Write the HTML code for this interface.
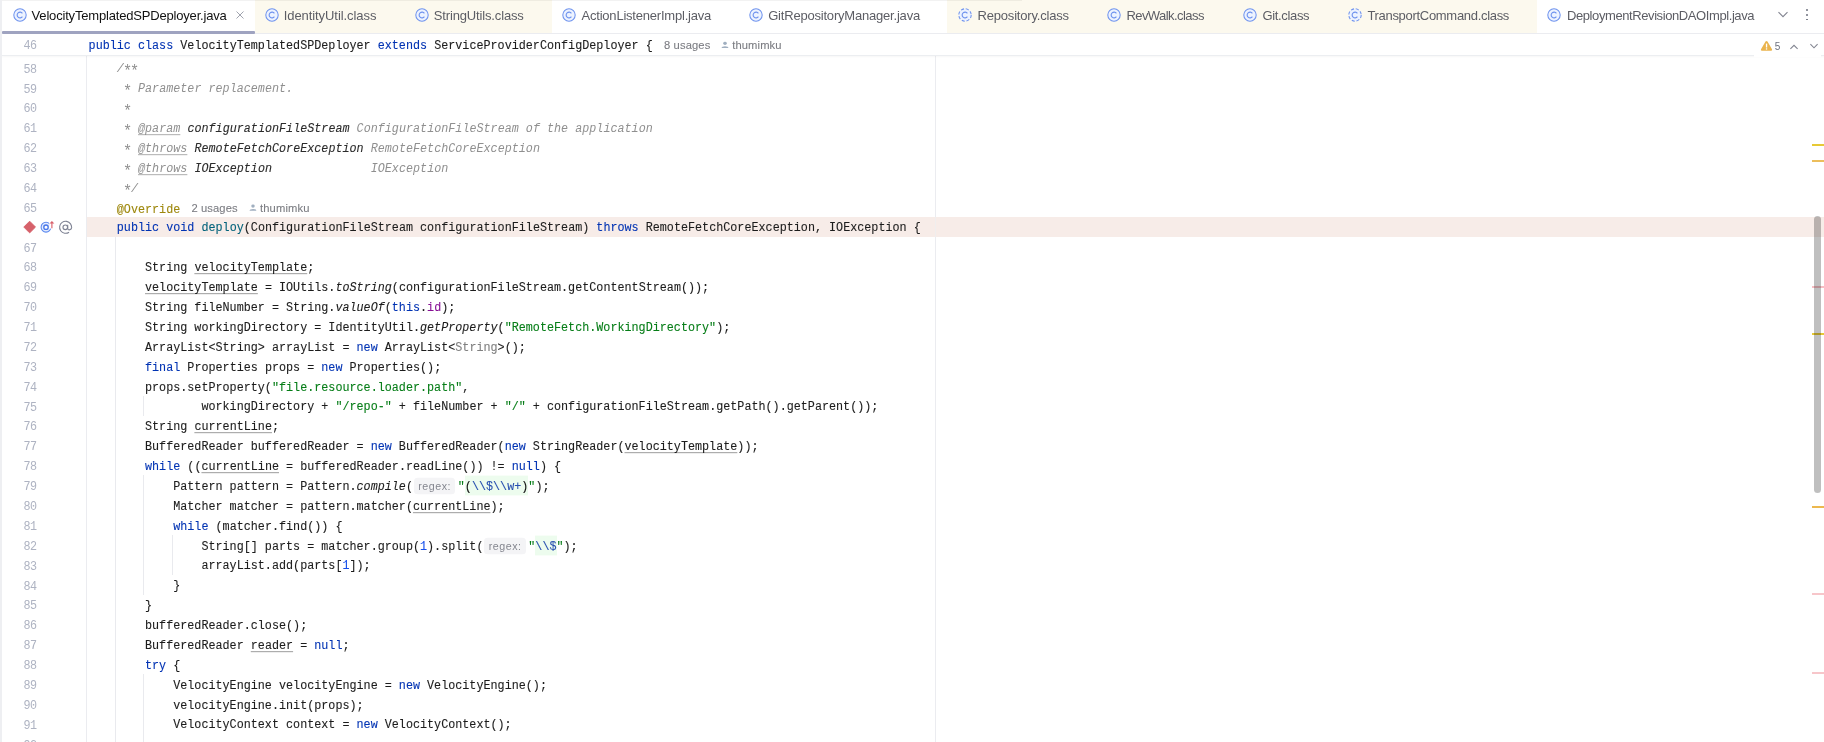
<!DOCTYPE html>
<html><head><meta charset="utf-8"><title>VelocityTemplatedSPDeployer.java</title>
<style>
*{box-sizing:border-box;margin:0;padding:0}
html,body{width:1824px;height:742px;overflow:hidden;background:#fff}
body{font-family:"Liberation Sans",sans-serif}
#root{will-change:transform;position:relative;width:1824px;height:742px;overflow:hidden;background:#fff;border-left:2px solid #eeeff2}
#root>*{margin-left:-2px}
#tabbar{position:absolute;left:0;top:0;width:1824px;height:34px;background:#fff;border-bottom:1px solid #ebecf0}
#tabbar::before{content:"";position:absolute;left:0;top:0;width:1022px;height:1px;background:rgba(0,0,0,0.05);z-index:3}
.cream{position:absolute;top:0;height:33px;background:#fcf9ee}
.cic{position:absolute;top:7.2px}
.tt{position:absolute;top:0.2px;height:31px;line-height:31px;font-size:13px;white-space:nowrap;color:#5c5d64}
.tt.ta{color:#111}
.xic{position:absolute;left:235px;top:10px}
#under{position:absolute;left:1.6px;top:31.3px;width:253px;height:3px;z-index:4;background:#9fa3c0;border-radius:1px}
.chev{position:absolute}
.dot{position:absolute;left:1806.2px;width:1.8px;height:1.8px;border-radius:1px;background:#6c707e}
#editor{position:absolute;left:0;top:34px;width:1824px;height:708px;background:#fff}
#gline{position:absolute;left:86px;top:22px;width:1px;height:700px;background:#ebecf0}
#margin{position:absolute;left:934.5px;top:22px;width:1px;height:700px;background:#ebecf0}
.ig{position:absolute;width:1px;background:#e9eaee;margin-top:-34px}
.ln{position:absolute;left:0;width:1824px;height:19.88px;line-height:19.88px;white-space:pre;font-family:"Liberation Mono",monospace;font-size:11.75px;color:#1c1c1c;margin-top:-34px}
.ln.hl::before{content:"";position:absolute;left:87px;right:0;top:-1.7px;bottom:1.7px;background:#f7ece8}
.ln .no{position:absolute;left:0;width:36.3px;top:1px;text-align:right;letter-spacing:-0.7px;color:#aeb3c2;transform:scaleY(1.1);transform-origin:0 13.07px}
.ln .code{position:absolute;left:88.6px;-webkit-text-stroke:0.1px;top:0.8px;transform:scaleY(1.1);transform-origin:0 13.07px}
.ln.sticky{top:0;height:22px;line-height:22px;margin-top:0;background:#fff}
#stickyline{position:absolute;left:2px;top:21px;width:1822px;height:1px;background:#eceef1;box-shadow:0 1px 2px rgba(0,0,0,0.05)}
.k{color:#0033b3}
.s{color:#067d17}
.c{color:#8f8f8f;font-style:italic;-webkit-text-stroke:0}
.dt{color:#8f8f8f;font-style:italic;text-decoration:underline;text-decoration-color:#b5b5b5;text-underline-offset:1.6px;-webkit-text-stroke:0}
.dp{color:#2b2b2b;font-style:italic}
.an{color:#9e880d}
.m{color:#00627a}
.f{color:#871094}
.n{color:#1750eb}
.g{color:#808080}
.si{font-style:italic}
.ru{text-decoration:underline;text-decoration-color:#a5a5a5;text-decoration-thickness:1px;text-underline-offset:1.6px}
.rx{color:#264eaf;background:#edfcee;padding:3.1px 0 0.7px}
.rxp{color:#111;background:#edfcee;padding:3.1px 0 0.7px}
.hint{display:inline-block;width:44.8px;height:14.4px;vertical-align:middle;position:relative;top:-0.5px}
.hint>span{position:absolute;left:0.8px;right:2.6px;top:0;bottom:0;background:#f4f4f6;border-radius:3.5px;color:#84868f;font-family:"Liberation Sans",sans-serif;font-size:10.7px;letter-spacing:0.5px;line-height:14.4px;text-align:center;padding-left:0.3px;-webkit-text-stroke:0}
.inl{font-family:"Liberation Sans",sans-serif;font-size:11.2px;letter-spacing:0.12px;color:#7b7c82;display:inline-block;vertical-align:baseline;position:relative;top:-1.2px;transform:scaleY(0.91);transform-origin:0 80%}
.u1{margin-left:12px}
.u2{margin-left:12px}
.u2 svg{margin-right:3.2px;position:relative;top:-0.6px}
#insp{position:absolute;left:1754px;top:0;width:67px;height:23px;background:#fff}
#insp .cnt{position:absolute;left:20.8px;top:0.9px;line-height:23px;font-size:10px;color:#6c707e}
#thumb{position:absolute;left:1814.1px;top:182.4px;width:7.3px;height:276.2px;border-radius:3.6px;background:rgba(0,0,0,0.25)}
.mk{position:absolute;left:1812px;width:12px;margin-top:-34px}
.ln.sticky .no{top:1.1px}
.ln.sticky .code{top:-0.5px}
.as{position:relative;top:2.6px;font-style:normal;display:inline-block;transform:scale(1.3)}
.ln.sticky .inl{top:-0.2px}
.ln.sticky .u1{margin-left:11.3px !important}
.ln.sticky .u2{margin-left:10.6px !important}
#mhl{position:absolute;left:934.5px;top:183px;width:1px;height:19.9px;background:#f0eeee}
#redge{display:none}

</style></head><body>
<div id="root">
<div id="tabbar">
<div class="cream" style="left:254.6px;width:297.2px"></div>
<div class="cream" style="left:947px;width:590.2px"></div>
<svg class="cic" style="left:11.6px" width="16" height="16" viewBox="0 0 16 16"><circle cx="8" cy="8" r="6.2" fill="#edf3ff" stroke="#6f93ee" stroke-width="1.05"/><path d="M10.4 6.3 A2.9 2.9 0 1 0 10.4 9.7" fill="none" stroke="#6f93ee" stroke-width="1.15"/></svg><span class="tt ta" id="t0" style="left:31.6px;letter-spacing:-0.184px">VelocityTemplatedSPDeployer.java</span><svg class="cic" style="left:264.0px" width="16" height="16" viewBox="0 0 16 16"><circle cx="8" cy="8" r="6.2" fill="#edf3ff" stroke="#6f93ee" stroke-width="1.05"/><path d="M10.4 6.3 A2.9 2.9 0 1 0 10.4 9.7" fill="none" stroke="#6f93ee" stroke-width="1.15"/></svg><span class="tt tc" id="t1" style="left:283.7px;letter-spacing:-0.072px">IdentityUtil.class</span><svg class="cic" style="left:413.8px" width="16" height="16" viewBox="0 0 16 16"><circle cx="8" cy="8" r="6.2" fill="#edf3ff" stroke="#6f93ee" stroke-width="1.05"/><path d="M10.4 6.3 A2.9 2.9 0 1 0 10.4 9.7" fill="none" stroke="#6f93ee" stroke-width="1.15"/></svg><span class="tt tc" id="t2" style="left:433.8px;letter-spacing:-0.154px">StringUtils.class</span><svg class="cic" style="left:561.2px" width="16" height="16" viewBox="0 0 16 16"><circle cx="8" cy="8" r="6.2" fill="#edf3ff" stroke="#6f93ee" stroke-width="1.05"/><path d="M10.4 6.3 A2.9 2.9 0 1 0 10.4 9.7" fill="none" stroke="#6f93ee" stroke-width="1.15"/></svg><span class="tt tj" id="t3" style="left:581.5px;letter-spacing:-0.209px">ActionListenerImpl.java</span><svg class="cic" style="left:748.1px" width="16" height="16" viewBox="0 0 16 16"><circle cx="8" cy="8" r="6.2" fill="#edf3ff" stroke="#6f93ee" stroke-width="1.05"/><path d="M10.4 6.3 A2.9 2.9 0 1 0 10.4 9.7" fill="none" stroke="#6f93ee" stroke-width="1.15"/></svg><span class="tt tj" id="t4" style="left:768.2px;letter-spacing:-0.201px">GitRepositoryManager.java</span><svg class="cic" style="left:957.2px" width="16" height="16" viewBox="0 0 16 16"><circle cx="8" cy="8" r="6.2" fill="#edf3ff" stroke="#6f93ee" stroke-width="1.05" stroke-dasharray="3.1 1.77"/><path d="M10.4 6.3 A2.9 2.9 0 1 0 10.4 9.7" fill="none" stroke="#6f93ee" stroke-width="1.15"/></svg><span class="tt td" id="t5" style="left:977.6px;letter-spacing:-0.200px">Repository.class</span><svg class="cic" style="left:1106.3px" width="16" height="16" viewBox="0 0 16 16"><circle cx="8" cy="8" r="6.2" fill="#edf3ff" stroke="#6f93ee" stroke-width="1.05"/><path d="M10.4 6.3 A2.9 2.9 0 1 0 10.4 9.7" fill="none" stroke="#6f93ee" stroke-width="1.15"/></svg><span class="tt tc" id="t6" style="left:1126.4px;letter-spacing:-0.564px">RevWalk.class</span><svg class="cic" style="left:1241.9px" width="16" height="16" viewBox="0 0 16 16"><circle cx="8" cy="8" r="6.2" fill="#edf3ff" stroke="#6f93ee" stroke-width="1.05"/><path d="M10.4 6.3 A2.9 2.9 0 1 0 10.4 9.7" fill="none" stroke="#6f93ee" stroke-width="1.15"/></svg><span class="tt tc" id="t7" style="left:1262.4px;letter-spacing:-0.330px">Git.class</span><svg class="cic" style="left:1347.2px" width="16" height="16" viewBox="0 0 16 16"><circle cx="8" cy="8" r="6.2" fill="#edf3ff" stroke="#6f93ee" stroke-width="1.05" stroke-dasharray="3.1 1.77"/><path d="M10.4 6.3 A2.9 2.9 0 1 0 10.4 9.7" fill="none" stroke="#6f93ee" stroke-width="1.15"/></svg><span class="tt td" id="t8" style="left:1367.4px;letter-spacing:-0.303px">TransportCommand.class</span><svg class="cic" style="left:1546.3px" width="16" height="16" viewBox="0 0 16 16"><circle cx="8" cy="8" r="6.2" fill="#edf3ff" stroke="#6f93ee" stroke-width="1.05"/><path d="M10.4 6.3 A2.9 2.9 0 1 0 10.4 9.7" fill="none" stroke="#6f93ee" stroke-width="1.15"/></svg><span class="tt tj" id="t9" style="left:1567.0px;letter-spacing:-0.411px">DeploymentRevisionDAOImpl.java</span>
<svg class="xic" width="10" height="10" viewBox="0 0 10 10"><path d="M1.5 1.5 L8.5 8.5 M8.5 1.5 L1.5 8.5" stroke="#a0a3ae" stroke-width="1" fill="none"/></svg>
<div id="under"></div>
<svg class="chev" style="left:1777.4px;top:9px" width="12" height="12" viewBox="0 0 12 12"><path d="M1.5 3.2 L6 7.7 L10.5 3.2" fill="none" stroke="#80838f" stroke-width="1.05"/></svg>
<div class="dot" style="top:9.2px"></div><div class="dot" style="top:13.9px"></div><div class="dot" style="top:18.6px"></div>
</div>
<div id="editor">
<div id="gline"></div>
<div id="margin"></div>
<div class="ig" style="left:115.2px;top:236.92px;height:536.76px"></div><div class="ig" style="left:143.4px;top:395.96px;height:19.88px"></div><div class="ig" style="left:143.4px;top:475.48px;height:119.28px"></div><div class="ig" style="left:171.6px;top:535.12px;height:39.76px"></div><div class="ig" style="left:143.4px;top:674.28px;height:99.40px"></div>
<div class="ln" style="top:59.63px"><span class="no">58</span><span class="code">    <span class="c">/<span class="as">*</span><span class="as">*</span></span></span></div>
<div class="ln" style="top:79.51px"><span class="no">59</span><span class="code">    <span class="c"> <span class="as">*</span> Parameter replacement.</span></span></div>
<div class="ln" style="top:99.39px"><span class="no">60</span><span class="code">    <span class="c"> <span class="as">*</span></span></span></div>
<div class="ln" style="top:119.27px"><span class="no">61</span><span class="code">    <span class="c"> <span class="as">*</span> </span><span class="dt">@param</span><span class="c"> </span><span class="dp">configurationFileStream</span><span class="c"> ConfigurationFileStream of the application</span></span></div>
<div class="ln" style="top:139.15px"><span class="no">62</span><span class="code">    <span class="c"> <span class="as">*</span> </span><span class="dt">@throws</span><span class="c"> </span><span class="dp">RemoteFetchCoreException</span><span class="c"> RemoteFetchCoreException</span></span></div>
<div class="ln" style="top:159.03px"><span class="no">63</span><span class="code">    <span class="c"> <span class="as">*</span> </span><span class="dt">@throws</span><span class="c"> </span><span class="dp">IOException</span><span class="c">              IOException</span></span></div>
<div class="ln" style="top:178.91px"><span class="no">64</span><span class="code">    <span class="c"> <span class="as">*</span>/</span></span></div>
<div class="ln" style="top:198.79px"><span class="no">65</span><span class="code">    <span class="an">@Override</span><span class="inl u1" style="margin-left:11.1px">2 usages</span><span class="inl u2" style="margin-left:11.1px"><svg width="8" height="7" viewBox="0 0 8 7"><circle cx="4" cy="1.9" r="1.75" fill="#a0afc0"/><path d="M0.6 6.6 Q0.6 4.7 4 4.7 Q7.4 4.7 7.4 6.6 Z" fill="#a0afc0"/></svg><span>thumimku</span></span></span></div>
<div class="ln hl" style="top:218.67px"><span class="no"></span><span class="code">    <span class="k">public</span> <span class="k">void</span> <span class="m">deploy</span>(ConfigurationFileStream configurationFileStream) <span class="k">throws</span> RemoteFetchCoreException, IOException {</span></div>
<div class="ln" style="top:238.55px"><span class="no">67</span><span class="code"></span></div>
<div class="ln" style="top:258.43px"><span class="no">68</span><span class="code">        String <span class="ru">velocityTemplate</span>;</span></div>
<div class="ln" style="top:278.31px"><span class="no">69</span><span class="code">        <span class="ru">velocityTemplate</span> = IOUtils.<span class="si">toString</span>(configurationFileStream.getContentStream());</span></div>
<div class="ln" style="top:298.19px"><span class="no">70</span><span class="code">        String fileNumber = String.<span class="si">valueOf</span>(<span class="k">this</span>.<span class="f">id</span>);</span></div>
<div class="ln" style="top:318.07px"><span class="no">71</span><span class="code">        String workingDirectory = IdentityUtil.<span class="si">getProperty</span>(<span class="s">"RemoteFetch.WorkingDirectory"</span>);</span></div>
<div class="ln" style="top:337.95px"><span class="no">72</span><span class="code">        ArrayList&lt;String&gt; arrayList = <span class="k">new</span> ArrayList&lt;<span class="g">String</span>&gt;();</span></div>
<div class="ln" style="top:357.83px"><span class="no">73</span><span class="code">        <span class="k">final</span> Properties props = <span class="k">new</span> Properties();</span></div>
<div class="ln" style="top:377.71px"><span class="no">74</span><span class="code">        props.setProperty(<span class="s">"file.resource.loader.path"</span>,</span></div>
<div class="ln" style="top:397.59px"><span class="no">75</span><span class="code">                workingDirectory + <span class="s">"/repo-"</span> + fileNumber + <span class="s">"/"</span> + configurationFileStream.getPath().getParent());</span></div>
<div class="ln" style="top:417.47px"><span class="no">76</span><span class="code">        String <span class="ru">currentLine</span>;</span></div>
<div class="ln" style="top:437.35px"><span class="no">77</span><span class="code">        BufferedReader bufferedReader = <span class="k">new</span> BufferedReader(<span class="k">new</span> StringReader(<span class="ru">velocityTemplate</span>));</span></div>
<div class="ln" style="top:457.23px"><span class="no">78</span><span class="code">        <span class="k">while</span> ((<span class="ru">currentLine</span> = bufferedReader.readLine()) != <span class="k">null</span>) {</span></div>
<div class="ln" style="top:477.11px"><span class="no">79</span><span class="code">            Pattern pattern = Pattern.<span class="si">compile</span>(<span class="hint"><span>regex:</span></span><span class="s">"</span><span class="rxp">(</span><span class="rx">\\$\\w+</span><span class="rxp">)</span><span class="s">"</span>);</span></div>
<div class="ln" style="top:496.99px"><span class="no">80</span><span class="code">            Matcher matcher = pattern.matcher(<span class="ru">currentLine</span>);</span></div>
<div class="ln" style="top:516.87px"><span class="no">81</span><span class="code">            <span class="k">while</span> (matcher.find()) {</span></div>
<div class="ln" style="top:536.75px"><span class="no">82</span><span class="code">                String[] parts = matcher.group(<span class="n">1</span>).split(<span class="hint"><span>regex:</span></span><span class="s">"</span><span class="rx">\\$</span><span class="s">"</span>);</span></div>
<div class="ln" style="top:556.63px"><span class="no">83</span><span class="code">                arrayList.add(parts[<span class="n">1</span>]);</span></div>
<div class="ln" style="top:576.51px"><span class="no">84</span><span class="code">            }</span></div>
<div class="ln" style="top:596.39px"><span class="no">85</span><span class="code">        }</span></div>
<div class="ln" style="top:616.27px"><span class="no">86</span><span class="code">        bufferedReader.close();</span></div>
<div class="ln" style="top:636.15px"><span class="no">87</span><span class="code">        BufferedReader <span class="ru">reader</span> = <span class="k">null</span>;</span></div>
<div class="ln" style="top:656.03px"><span class="no">88</span><span class="code">        <span class="k">try</span> {</span></div>
<div class="ln" style="top:675.91px"><span class="no">89</span><span class="code">            VelocityEngine velocityEngine = <span class="k">new</span> VelocityEngine();</span></div>
<div class="ln" style="top:695.79px"><span class="no">90</span><span class="code">            velocityEngine.init(props);</span></div>
<div class="ln" style="top:715.67px"><span class="no">91</span><span class="code">            VelocityContext context = <span class="k">new</span> VelocityContext();</span></div>
<div class="ln" style="top:735.55px"><span class="no">92</span><span class="code"></span></div>
<div class="ln sticky"><span class="no">46</span><span class="code"><span class="k">public</span> <span class="k">class</span> VelocityTemplatedSPDeployer <span class="k">extends</span> ServiceProviderConfigDeployer {<span class="inl u1" style="margin-left:11.1px">8 usages</span><span class="inl u2" style="margin-left:11.1px"><svg width="8" height="7" viewBox="0 0 8 7"><circle cx="4" cy="1.9" r="1.75" fill="#a0afc0"/><path d="M0.6 6.6 Q0.6 4.7 4 4.7 Q7.4 4.7 7.4 6.6 Z" fill="#a0afc0"/></svg><span>thumimku</span></span></span></div>
<div id="mhl"></div>
<div id="stickyline"></div>
<div id="insp">
<svg style="position:absolute;left:6px;top:6px" width="13" height="12" viewBox="0 0 13 12"><path d="M6.5 0.9 Q7.1 0.9 7.5 1.6 L12 9.3 Q12.6 10.6 11.2 10.7 L1.8 10.7 Q0.4 10.6 1 9.3 L5.5 1.6 Q5.9 0.9 6.5 0.9 Z" fill="#eab44e"/><rect x="5.9" y="3.6" width="1.3" height="3.9" fill="#fff"/><rect x="5.9" y="8.3" width="1.3" height="1.3" fill="#fff"/></svg>
<span class="cnt">5</span>
<svg style="position:absolute;left:35.3px;top:8.5px" width="10" height="8" viewBox="0 0 10 8"><path d="M1.4 5.9 L5 2.3 L8.6 5.9" fill="none" stroke="#80838f" stroke-width="1.05"/></svg>
<svg style="position:absolute;left:54.8px;top:8.2px" width="10" height="8" viewBox="0 0 10 8"><path d="M1.4 2.2 L5 5.8 L8.6 2.2" fill="none" stroke="#80838f" stroke-width="1.05"/></svg>
</div>
<svg id="gic" width="60" height="20" viewBox="0 0 60 20" style="position:absolute;left:20px;top:183.2px">
<path d="M9.65 4.2 L15.3 9.85 Q15.5 10.05 15.3 10.25 L9.85 15.7 Q9.65 15.9 9.45 15.7 L4 10.25 Q3.8 10.05 4 9.85 Z" fill="#d6616a" stroke="#d6616a" stroke-width="0.9" stroke-linejoin="round"/>
<circle cx="26" cy="10.2" r="4.9" fill="#e3ebfd" stroke="#5b88f0" stroke-width="1.05"/>
<circle cx="26" cy="10.2" r="2.2" fill="#fff" stroke="#4a78ea" stroke-width="1.35"/>
<rect x="29.2" y="3.2" width="5.6" height="8.4" fill="#fff"/>
<path d="M31.9 11.2 L31.9 5.5" stroke="#d9606b" stroke-width="1.15" fill="none"/>
<path d="M29.5 6.6 L31.9 3.9 L34.3 6.6 Z" fill="#d9606b"/>
<circle cx="45.6" cy="10.3" r="6" fill="none" stroke="#7f8394" stroke-width="1.1" stroke-dasharray="31.5 6.2" transform="rotate(55 45.6 10.3)"/>
<circle cx="45.3" cy="10.3" r="2.3" fill="none" stroke="#7f8394" stroke-width="1.15"/>
<path d="M47.7 7.8 L47.7 11.2 Q47.8 12.9 49.3 12.9 Q51.6 12.7 51.6 10.3" fill="none" stroke="#7f8394" stroke-width="1.1"/>
</svg>
<div class="mk" style="top:143.9px;height:2.0px;background:#e7c935"></div><div class="mk" style="top:159.9px;height:2.0px;background:#ecbe5c"></div><div class="mk" style="top:286.0px;height:1.6px;background:#f6bfc4"></div><div class="mk" style="top:332.5px;height:2.0px;background:#e7c935"></div><div class="mk" style="top:506.2px;height:2.0px;background:#ecb84e"></div><div class="mk" style="top:593.1px;height:2.0px;background:#f7c6ca"></div><div class="mk" style="top:671.8px;height:2.0px;background:#f7c6ca"></div>
<div id="thumb"></div>
</div>
<div id="redge"></div>
</div>
</body></html>
